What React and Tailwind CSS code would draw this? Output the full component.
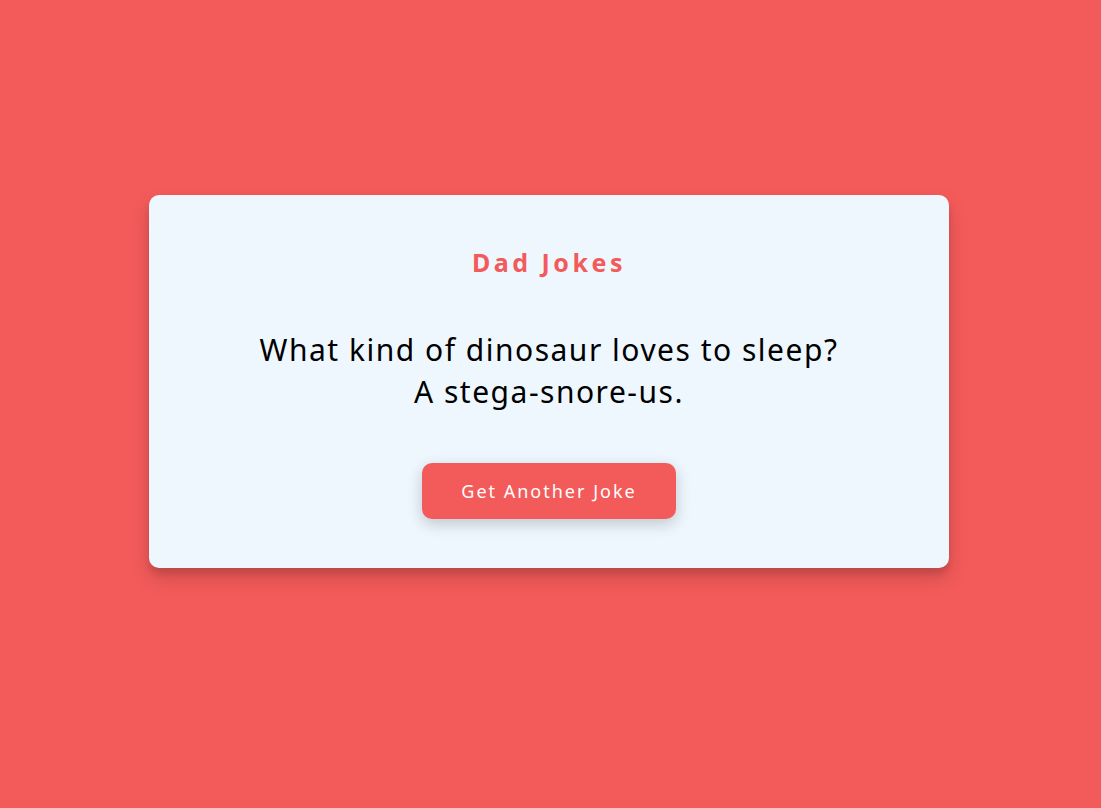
export default function App() {
  return (
    <div
      className="min-h-screen w-full bg-[#f35b5a] flex justify-center items-start pt-[195px] pr-[3px]"
      style={{ fontFamily: '"Noto Sans", "Open Sans", sans-serif' }}
    >
      <div className="w-[800px] bg-[#eff7fe] rounded-[10px] shadow-[0_10px_20px_rgba(0,0,0,0.15),0_6px_6px_rgba(0,0,0,0.1)] px-5 pt-[50px] pb-[49px] text-center">
        <h3 className="m-0 text-[25px] leading-[34px] font-bold tracking-[3.5px] text-[#f35b5a]">
          Dad Jokes
        </h3>
        <div className="mx-auto my-[50px] text-[30px] leading-[42px] tracking-[1.5px] text-black">
          <p>What kind of dinosaur loves to sleep?</p>
          <p>A stega-snore-us.</p>
        </div>
        <button className="bg-[#f35b5a] text-white text-[18px] tracking-[2px] rounded-[10px] w-[254px] h-[56px] shadow-[0_5px_15px_rgba(0,0,0,0.2)]">
          Get Another Joke
        </button>
      </div>
    </div>
  );
}
